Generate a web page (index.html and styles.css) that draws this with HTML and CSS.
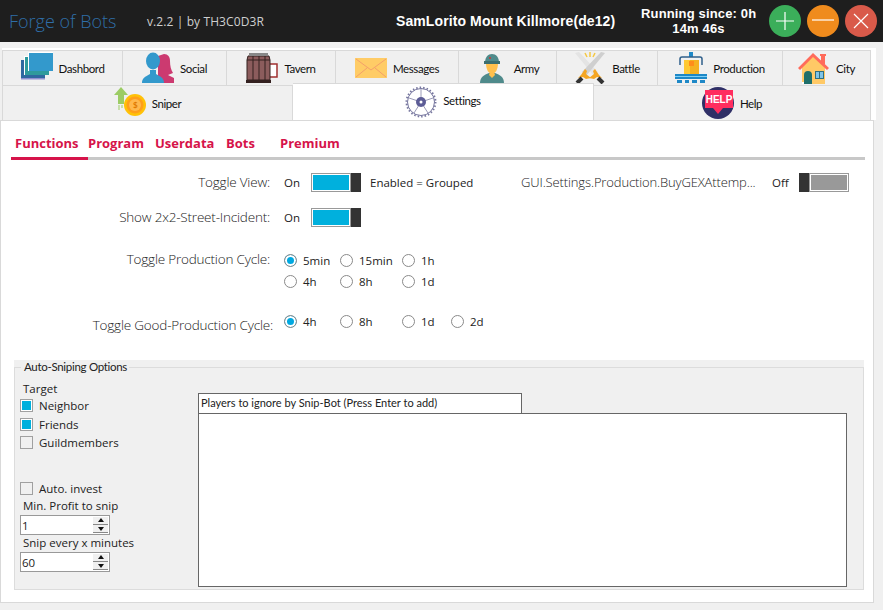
FILE: index.html
```html
<!DOCTYPE html>
<html lang="en">
<head>
    <meta charset="UTF-8">
    <title>Forge of Bots</title>
    <link rel="stylesheet" href="styles.css">
</head>
<body>
    <header class="topbar">
        <span class="app-title">Forge of Bots</span>
        <span class="app-version">v.2.2 | by TH3C0D3R</span>
        <span class="account">SamLorito Mount Killmore(de12)</span>
        <span class="uptime">Running since: 0h<br>14m 46s</span>
        <div class="win-buttons">
            <button class="win-btn green"><svg viewBox="0 0 32 32"><path d="M16 7v18M7 16h18"/></svg></button>
            <button class="win-btn orange"><svg viewBox="0 0 32 32"><path d="M5 15h22"/></svg></button>
            <button class="win-btn red"><svg viewBox="0 0 32 32"><path d="M9 9l14 14M23 9L9 23"/></svg></button>
        </div>
    </header>

    <nav class="tabs">
        <div class="tab-row">
            <div class="tab w-dash">
                <svg class="tab-icon" viewBox="0 0 32 32"><rect x="0" y="8" width="24" height="19" fill="#2f68a0"/><rect x="0" y="26" width="24" height="1.5" fill="#8f8fcf"/><rect x="3" y="4" width="25" height="19" fill="#fff"/><rect x="4" y="5" width="24" height="18" fill="#2f9a9c"/><rect x="7" y="0" width="25" height="19" fill="#fff"/><rect x="8" y="1" width="24" height="18" fill="#3399cc"/></svg>
                <span>Dashbord</span>
            </div>
            <div class="tab w-social">
                <svg class="tab-icon" viewBox="0 0 32 32"><path d="M22 2c4 0 6 3 6 7 0 5 1 9 3 12l-5 2 6 3v5H16V4z" fill="#cc3a70"/><ellipse cx="11" cy="9" rx="7" ry="8.500" fill="#3399cc"/><path d="M0 31c0-5 3-6 8-9v-4h6v4c5 3 8 4 8 9z" fill="#3399cc"/></svg>
                <span>Social</span>
            </div>
            <div class="tab w-tavern">
                <svg class="tab-icon" viewBox="0 0 32 32"><path d="M24 12h7v13h-7" fill="#fff" stroke="#a03030" stroke-width="1.500"/><path d="M2 4h21l1 4v20H1V8z" fill="#8c5c5c" stroke="#33201f"/><path d="M1 8h23M7 4v26M13 4v26M19 4v26" stroke="#33201f" fill="none"/><rect x="0" y="28" width="25" height="3" fill="#33201f"/><rect x="3" y="1" width="19" height="3" fill="#888"/></svg>
                <span>Tavern</span>
            </div>
            <div class="tab w-msg">
                <svg class="tab-icon" viewBox="0 0 32 32"><rect x="0" y="6" width="32" height="20" fill="#ffcc66"/><path d="M1 7l15 11L31 7M1 25l11-9M31 25l-11-9" fill="none" stroke="#f4a06a"/></svg>
                <span>Messages</span>
            </div>
            <div class="tab w-army">
                <svg class="tab-icon" viewBox="0 0 32 32"><path d="M4 31c0-6 4-8 9-10h6c5 2 9 4 9 10z" fill="#4f8a8b"/><path d="M14 20h4l1 3-3 3-3-3z" fill="#ffc04d"/><path d="M10 11h12c0 7-3 11-6 11s-6-4-6-11z" fill="#ffc04d"/><path d="M9 11c0-6 3-9 7-9s7 3 7 9z" fill="#4f8a8b"/><rect x="8" y="9" width="16" height="3" fill="#3c6f70"/><circle cx="14" cy="6" r="1" fill="#c33"/></svg>
                <span>Army</span>
            </div>
            <div class="tab w-battle">
                <svg class="tab-icon" viewBox="0 0 32 32"><path d="M1 1l4-1 19 20-4 4z" fill="#e4e4e4"/><path d="M31 1l-4-1L8 20l4 4z" fill="#cfcfcf"/><path d="M4 26l3-3 4-6 2 2-1 3 5 4-5 1-3-2z" fill="#f5a623"/><path d="M28 26l-3-3-4-6-2 2 1 3-5 4 5 1 3-2z" fill="#f5a623"/><path d="M3 31l5-5" stroke="#333" stroke-width="4"/><path d="M29 31l-5-5" stroke="#333" stroke-width="4"/><path d="M16 0v5M11 1l2 4M21 1l-2 4" stroke="#f5c842" stroke-width="1.500"/></svg>
                <span>Battle</span>
            </div>
            <div class="tab w-prod">
                <svg class="tab-icon" viewBox="0 0 32 32"><rect x="14" y="0" width="4" height="5" fill="#1e88c7"/><path d="M5 13V7q0-2 2-2h18q2 0 2 2v6" fill="none" stroke="#2f5f8a" stroke-width="1.500"/><rect x="9" y="8" width="15" height="14" fill="#ffc933"/><rect x="15" y="8" width="9" height="14" fill="#f5b120"/><rect x="14" y="9" width="5" height="5" fill="#ff8c1a"/><rect x="0" y="22" width="32" height="5" fill="#1e88c7"/><rect x="0" y="24" width="32" height="1" fill="#7fd0f5"/><path d="M2 28h5v3H2zM10 28h4v3h-4zM17 28h5v3h-5zM25 28h5v3h-5z" fill="#1e88c7"/></svg>
                <span>Production</span>
            </div>
            <div class="tab w-city">
                <svg class="tab-icon" viewBox="0 0 32 32"><rect x="23" y="3" width="4" height="9" fill="#ff6b5b"/><rect x="22" y="2" width="6" height="2" fill="#ff6b5b"/><path d="M4 14L15 3l12 11v18H4z" fill="#ffc966"/><path d="M0 16L15 1l16 15-2 2L15 5 2 18z" fill="#ff6b5b"/><path d="M6 32V23a4 4 0 0 1 8 0v9z" fill="#1f6f6a"/><rect x="17" y="19" width="9" height="8" fill="#2f6f80"/><path d="M18 20h3v6h-3zM22 20h3v6h-3z" fill="#7fc4e8"/><rect x="4" y="30" width="2" height="2" fill="#fff"/></svg>
                <span>City</span>
            </div>
        </div>
        <div class="tab-row">
            <div class="tab w-sniper">
                <svg class="tab-icon" viewBox="0 0 32 32"><path d="M7 0l7 8h-4v9H4V8H0z" fill="#9ccc65"/><path d="M5 18v5M8 18v3" stroke="#9ccc65"/><circle cx="21" cy="18" r="11" fill="#ffc107"/><circle cx="21" cy="18" r="8.500" fill="#ff9f1a"/><circle cx="21" cy="18" r="6" fill="#ffb84d"/><text x="21" y="21" class="coin-text">$</text></svg>
                <span>Sniper</span>
            </div>
            <div class="tab w-settings active">
                <svg class="tab-icon" viewBox="0 0 32 32"><circle cx="16" cy="16" r="13.500" fill="none" stroke="#77779f" stroke-width="1"/><circle cx="16" cy="16" r="14.500" fill="none" stroke="#77779f" stroke-width="2" stroke-dasharray="1.500 2"/><path d="M16 16V3M16 16L4 12M16 16l12-4M16 16L9 27M16 16l7 11" stroke="#9a9ab8"/><circle cx="16" cy="16" r="5" fill="#5c5c96"/><circle cx="16" cy="16" r="1.500" fill="#fff"/></svg>
                <span>Settings</span>
            </div>
            <div class="tab w-help">
                <svg class="tab-icon" viewBox="0 0 32 32"><circle cx="16" cy="16" r="16" fill="#2f2f66"/><path d="M3 3h28v18H21l-5 6-5-6H3z" fill="#ff2d5f"/><text x="17" y="16" class="help-text">HELP</text></svg>
                <span>Help</span>
            </div>
        </div>
    </nav>

    <main class="panel">
        <div class="subnav">
            <a class="sub-item s-functions current">Functions</a>
            <a class="sub-item s-program">Program</a>
            <a class="sub-item s-userdata">Userdata</a>
            <a class="sub-item s-bots">Bots</a>
            <a class="sub-item s-premium">Premium</a>
        </div>

        <section class="options">
            <div class="row row-view">
                <span class="label">Toggle View:</span>
                <span class="state">On</span>
                <span class="toggle on"><i></i><b></b></span>
                <span class="hint">Enabled = Grouped</span>
                <span class="gex-label">GUI.Settings.Production.BuyGEXAttemp...</span>
                <span class="state-off">Off</span>
                <span class="toggle off"><b></b><i></i></span>
            </div>
            <div class="row row-street">
                <span class="label">Show 2x2-Street-Incident:</span>
                <span class="state">On</span>
                <span class="toggle on"><i></i><b></b></span>
            </div>
            <div class="row row-cycle">
                <span class="label">Toggle Production Cycle:</span>
                <div class="radios three">
                    <label class="radio"><input type="radio" name="cycle" checked>5min</label>
                    <label class="radio"><input type="radio" name="cycle">15min</label>
                    <label class="radio"><input type="radio" name="cycle">1h</label>
                    <label class="radio"><input type="radio" name="cycle">4h</label>
                    <label class="radio"><input type="radio" name="cycle">8h</label>
                    <label class="radio"><input type="radio" name="cycle">1d</label>
                </div>
            </div>
            <div class="row row-good">
                <span class="label">Toggle Good-Production Cycle:</span>
                <div class="radios">
                    <label class="radio"><input type="radio" name="good" checked>4h</label>
                    <label class="radio"><input type="radio" name="good">8h</label>
                    <label class="radio"><input type="radio" name="good">1d</label>
                    <label class="radio"><input type="radio" name="good">2d</label>
                </div>
            </div>
        </section>

        <div class="group-wrap">
            <fieldset class="group">
                <legend>Auto-Sniping Options</legend>
                <div class="snipe-left">
                    <div class="snipe-title">Target</div>
                    <label class="check c-neighbor"><input type="checkbox" checked>Neighbor</label>
                    <label class="check c-friends"><input type="checkbox" checked>Friends</label>
                    <label class="check c-guild"><input type="checkbox">Guildmembers</label>
                    <label class="check c-invest"><input type="checkbox">Auto. invest</label>
                    <div class="snipe-title t-profit">Min. Profit to snip</div>
                    <div class="spin"><span>1</span><div class="spin-btns"><i class="up"></i><i class="down"></i></div></div>
                    <div class="snipe-title t-every">Snip every x minutes</div>
                    <div class="spin"><span>60</span><div class="spin-btns"><i class="up"></i><i class="down"></i></div></div>
                </div>
                <div class="snipe-right">
                    <div class="ignore-title">Players to ignore by Snip-Bot (Press Enter to add)</div>
                    <div class="ignore-list"></div>
                </div>
            </fieldset>
        </div>
    </main>
</body>
</html>
```

FILE: styles.css
```css
/* base */
body {
    margin: 0;
    height: 610px;
    overflow: hidden;
    background-color: #f0f0f0;
    font-family: "Open Sans", sans-serif;
    font-size: 12px;
    color: #222;
}

/* title bar */
.topbar {
    height: 42px;
    background-color: #1e1e1e;
    display: flex;
    align-items: center;
    color: #fff;
}

.app-title {
    margin-left: 9px;
    width: 138px;
    font-size: 18px;
    font-weight: 300;
    color: #2f6ea8;
}

.app-version {
    width: 249px;
    font-size: 12px;
    color: #cfcfcf;
    letter-spacing: 0.1px;
}

.account {
    width: 245px;
    font-family: "Liberation Sans", sans-serif;
    font-size: 14px;
    font-weight: bold;
    letter-spacing: 0.1px;
    white-space: nowrap;
}

.uptime {
    width: 115px;
    font-family: "Liberation Sans", sans-serif;
    font-size: 13px;
    font-weight: bold;
    letter-spacing: 0.15px;
    line-height: 15px;
    text-align: center;
    white-space: nowrap;
}

.win-buttons {
    display: flex;
    gap: 6px;
    margin-left: 13px;
}

.win-btn {
    width: 32px;
    height: 32px;
    padding: 0;
    border: none;
    border-radius: 50%;
}

.win-btn svg {
    display: block;
    stroke: #fff;
    stroke-width: 1.2;
    fill: none;
}

.green { background-color: #3bae5a; }
.orange { background-color: #ef8b1d; }
.red { background-color: #d95a4a; }

/* main tabs */
.tabs {
    width: 874px;
    margin: 6px 0 0 2px;
    padding-top: 2px;
    background-color: #fff;
}

.tab-row {
    display: flex;
    width: 869px;
    height: 35px;
}

.tab {
    box-sizing: border-box;
    display: flex;
    align-items: center;
    justify-content: center;
    gap: 6px;
    height: 36px;
    background-color: #f0f0f0;
    border: 1px solid #d9d9d9;
    border-left: none;
    font-family: "Lato", sans-serif;
    font-size: 11.5px;
    letter-spacing: -0.4px;
    color: #111;
}

.tab:first-child {
    border-left: 1px solid #d9d9d9;
}

.tab-icon {
    width: 32px;
    height: 32px;
    flex: none;
}

.tab.active {
    position: relative;
    z-index: 1;
    height: 38px;
    margin-top: -2px;
    background-color: #fff;
    align-items: flex-start;
    padding-top: 2px;
}

.w-dash { width: 121px; }
.w-social { width: 104px; }
.w-tavern { width: 109px; }
.w-msg { width: 123px; }
.w-army { width: 98px; }
.w-battle { width: 101px; }
.w-prod { width: 125px; }
.w-city { width: 88px; }
.w-sniper { width: 291px; }
.w-settings { width: 301px; }
.w-help { width: 277px; }

.tab.active span {
    margin-top: 8px;
}

.coin-text {
    font-size: 8px;
    font-weight: bold;
    fill: #e07a00;
    text-anchor: middle;
}

.help-text {
    font-family: "Liberation Sans", sans-serif;
    font-size: 10px;
    font-weight: bold;
    letter-spacing: 0;
    fill: #fff;
    text-anchor: middle;
}

/* settings panel */
.panel {
    box-sizing: border-box;
    width: 874px;
    height: 483px;
    margin-top: 0;
    background-color: #fff;
    border: 1px solid #d9d9d9;
}

.subnav {
    display: flex;
    height: 39px;
    margin: 0 8px 0 10px;
    border-bottom: 3px solid #c8c8c8;
    box-sizing: border-box;
}

.sub-item {
    box-sizing: border-box;
    height: 39px;
    padding-top: 13px;
    font-size: 13px;
    font-weight: 700;
    color: #d6134a;
    white-space: nowrap;
}

.sub-item.current {
    border-bottom: 3px solid #d6134a;
}

.s-functions { width: 77px; padding-left: 4px; }
.s-program { width: 67px; }
.s-userdata { width: 71px; }
.s-bots { width: 54px; }

/* option rows */
.options {
    height: 200px;
    box-sizing: border-box;
    padding-top: 12px;
}

.row {
    display: flex;
    align-items: center;
}

.row-view, .row-street { height: 20px; }
.row-street { margin-top: 15px; }
.row-cycle { margin-top: 23px; align-items: flex-start; }
.row-good { margin-top: 19px; align-items: flex-start; }

.label {
    width: 269px;
    margin-right: 14px;
    font-size: 13.5px;
    line-height: 18px;
    letter-spacing: -0.2px;
    font-weight: 300;
    color: #222;
    text-align: right;
    white-space: nowrap;
    flex: none;
}

.row-good .label { width: 272px; margin-right: 11px; padding-top: 5px; }

.state {
    width: 27px;
    font-size: 11.5px;
}

.state-off {
    width: 27px;
    font-size: 11.5px;
}

.hint {
    margin-left: 9px;
    width: 151px;
    font-size: 11.5px;
}

.gex-label {
    width: 251px;
    font-size: 13px;
    letter-spacing: -0.13px;
    font-weight: 300;
    color: #222;
    white-space: nowrap;
}

.toggle {
    display: flex;
    width: 50px;
    height: 19px;
}

.toggle i {
    box-sizing: border-box;
    width: 40px;
    height: 19px;
    border: 1px solid #999;
    padding: 1px;
    background-clip: content-box;
}

.toggle b {
    width: 10px;
    height: 19px;
    background-color: #333;
}

.toggle.on i { background-color: #00b0dd; }
.toggle.off i { background-color: #999; }

.radios {
    display: grid;
    grid-template-columns: 56px 62px 49px 50px;
    grid-auto-rows: 21px;
}

.radios.three {
    grid-template-columns: 56px 62px 49px;
}

.radio {
    display: flex;
    align-items: center;
    gap: 6px;
    font-size: 11.5px;
}

.radio input {
    appearance: none;
    box-sizing: border-box;
    width: 13px;
    height: 13px;
    margin: 0;
    border: 1px solid #8a8a8a;
    border-radius: 50%;
    background-color: #fff;
}

.radio input:checked {
    background-color: #00a8e0;
    box-shadow: inset 0 0 0 2px #fff;
}

/* auto sniping box */
.group-wrap {
    width: 850px;
    height: 230px;
    margin-left: 13px;
    background-color: #f0f0f0;
}

.group {
    box-sizing: border-box;
    display: flex;
    height: 230px;
    margin: 0;
    padding: 0 16px 2px 5px;
    border: 1px solid #dcdcdc;
}

.group legend {
    margin-left: 1px;
    padding: 0 2px 0 3px;
    font-family: "Lato", sans-serif;
    font-size: 11.5px;
    line-height: 14px;
    letter-spacing: -0.3px;
    color: #222;
}

.snipe-left {
    width: 178px;
    flex: none;
}

.snipe-title {
    margin-left: 3px;
    height: 15px;
    margin-top: 8px;
    font-size: 11.5px;
    line-height: 13px;
}

.check {
    display: flex;
    align-items: center;
    gap: 6px;
    height: 13px;
    font-size: 11.5px;
    color: #222;
}

.check input {
    appearance: none;
    box-sizing: border-box;
    width: 13px;
    height: 13px;
    margin: 0;
    border: 1px solid #a0a0a0;
    background-color: #f0f0f0;
}

.check input:checked {
    background-color: #00b0dd;
    box-shadow: inset 0 0 0 1px #fff;
}

.c-neighbor { margin-top: 2px; }
.c-friends { margin-top: 6px; }
.c-guild { margin-top: 5px; }
.c-invest { margin-top: 33px; }

.t-profit { margin-top: 4px; }
.t-every { margin-top: 1px; }

.spin {
    box-sizing: border-box;
    display: flex;
    justify-content: space-between;
    align-items: center;
    width: 90px;
    height: 20px;
    margin-top: 1px;
    padding: 0 1px 0 1px;
    background-color: #fff;
    border: 1px solid #999;
    font-size: 11.5px;
}

.spin-btns {
    display: flex;
    flex-direction: column;
    width: 15px;
    height: 16px;
    gap: 1px;
    background-color: #f0f0f0;
}

.spin-btns i {
    flex: 1;
    display: flex;
    align-items: center;
    justify-content: center;
    border-bottom: 1px solid #888;
}

.spin-btns .up::before {
    content: "";
    border: 3px solid transparent;
    border-top: none;
    border-bottom: 4px solid #111;
}

.spin-btns .down::before {
    content: "";
    border: 3px solid transparent;
    border-bottom: none;
    border-top: 4px solid #111;
}

.snipe-right {
    flex: 1;
    padding-top: 19px;
}

.ignore-title {
    box-sizing: border-box;
    width: 324px;
    height: 20px;
    padding-left: 2px;
    background-color: #fff;
    border: 1px solid #666;
    border-bottom: none;
    font-family: "Lato", sans-serif;
    font-size: 11px;
    line-height: 18px;
    white-space: nowrap;
}

.ignore-list {
    box-sizing: border-box;
    height: 174px;
    background-color: #fff;
    border: 1px solid #666;
}
```
